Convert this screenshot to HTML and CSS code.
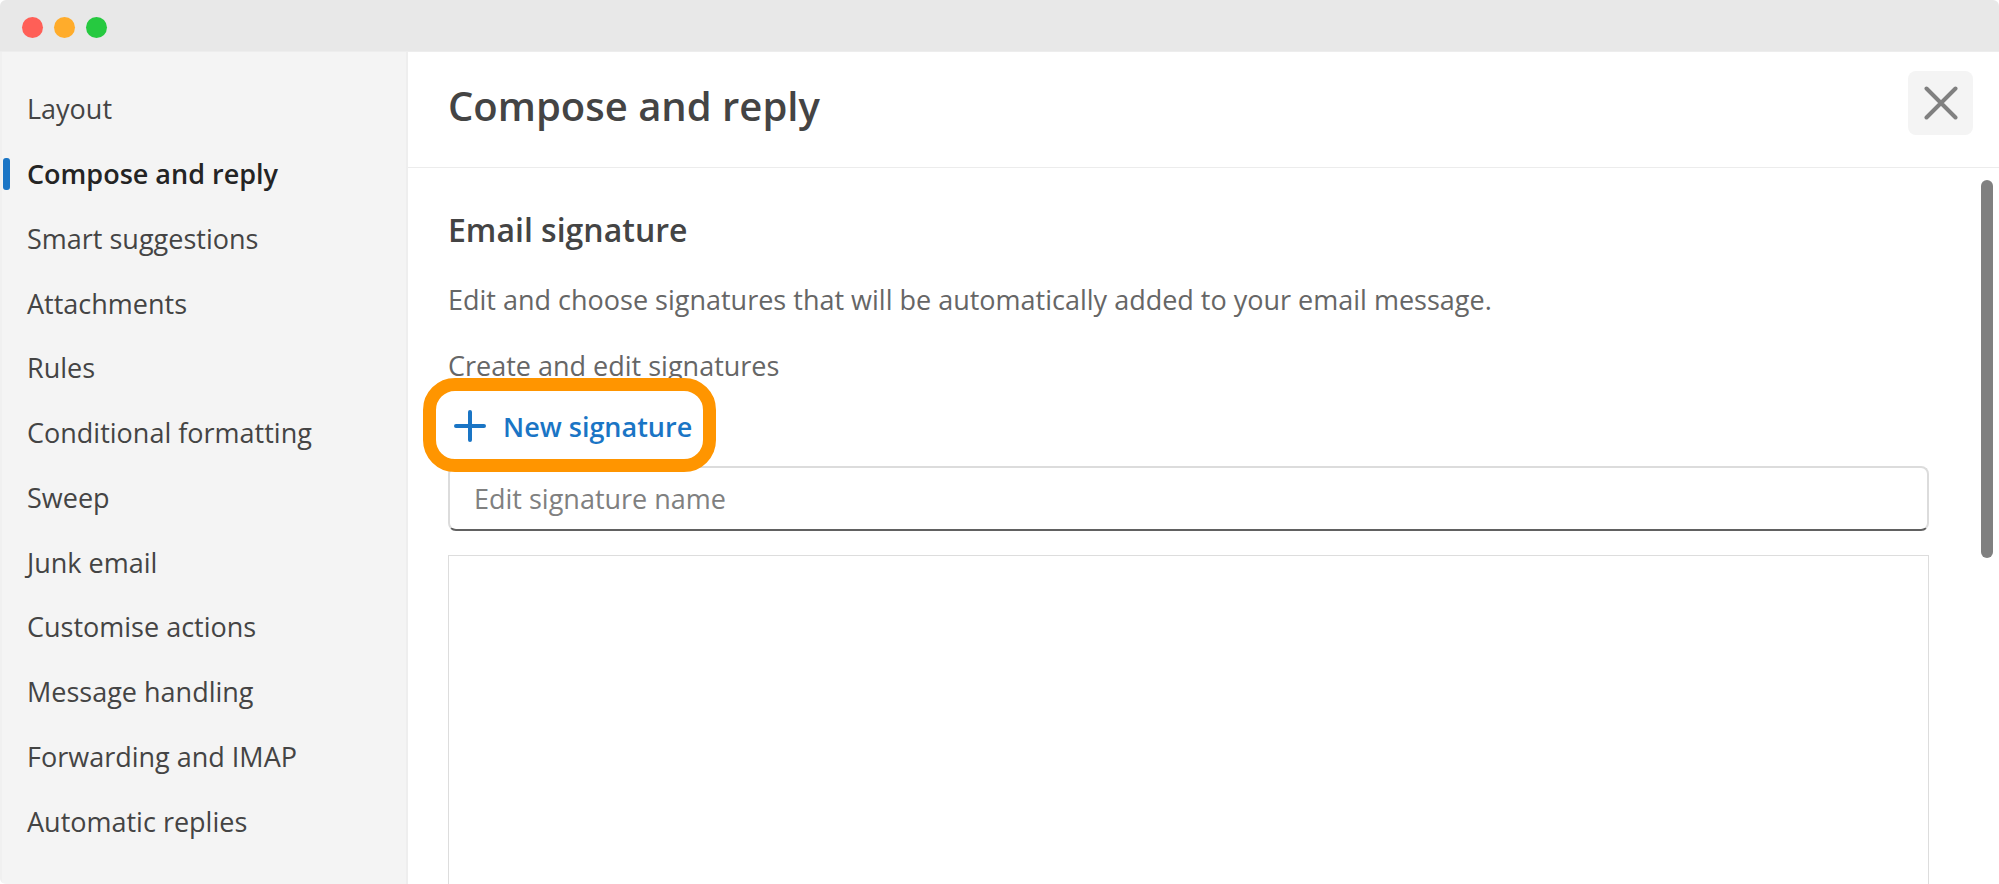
FILE: index.html
```html
<!DOCTYPE html>
<html lang="en">
<head>
  <meta charset="UTF-8">
  <meta name="viewport" content="width=device-width, initial-scale=1.0">
  <title>Compose and reply</title>
  <link rel="stylesheet" href="styles.css">
</head>
<body>
  <div class="window">
    <div class="titlebar">
      <span class="dot red"></span>
      <span class="dot yellow"></span>
      <span class="dot green"></span>
    </div>

    <div class="settings">
      <nav class="sidebar">
        <a class="navItem" href="#">Layout</a>
        <a class="navItem active" href="#">Compose and reply</a>
        <a class="navItem" href="#">Smart suggestions</a>
        <a class="navItem" href="#">Attachments</a>
        <a class="navItem" href="#">Rules</a>
        <a class="navItem" href="#">Conditional formatting</a>
        <a class="navItem" href="#">Sweep</a>
        <a class="navItem" href="#">Junk email</a>
        <a class="navItem" href="#">Customise actions</a>
        <a class="navItem" href="#">Message handling</a>
        <a class="navItem" href="#">Forwarding and IMAP</a>
        <a class="navItem" href="#">Automatic replies</a>
      </nav>

      <main class="panel">
        <header class="panelHeader">
          <h1>Compose and reply</h1>
          <button type="button" class="closeBtn" aria-label="Close">
            <svg width="34" height="34" viewBox="0 0 34 34">
              <path d="M2.5 2.5 L31.5 31.5 M31.5 2.5 L2.5 31.5" />
            </svg>
          </button>
        </header>

        <div class="content">
          <h2>Email signature</h2>
          <p class="intro">Edit and choose signatures that will be automatically added to your email message.</p>
          <label class="fieldLabel" for="signatureName">Create and edit signatures</label>
          <button type="button" class="newBtn">
            <svg width="32" height="32" viewBox="0 0 32 32">
              <path d="M16 2 V30 M2 16 H30" />
            </svg>
            New signature
          </button>
          <input type="text" class="nameInput" id="signatureName" placeholder="Edit signature name">
          <textarea class="editor" aria-label="Signature"></textarea>
          <div class="scrollThumb"></div>
        </div>
      </main>
    </div>
  </div>
</body>
</html>
```

FILE: styles.css
```css
*,
*::before,
*::after {
  box-sizing: border-box;
}

body {
  margin: 0;
  background-color: #fff;
  font-family: "Open Sans", "Noto Sans", sans-serif;
  font-size: 27px;
  color: #444;
}

.window {
  display: flex;
  flex-direction: column;
  height: 100vh;
  border-radius: 6px;
  overflow: hidden;
}

.titlebar {
  display: flex;
  flex: none;
  align-items: center;
  gap: 11px;
  height: 52px;
  padding: 3px 22px 0;
  background-color: #e8e8e8;
  border-bottom: 1px solid #ededed;
}
.dot {
  width: 21px;
  height: 21px;
  border-radius: 50%;
}
.red {
  background-color: #ff5f57;
}
.yellow {
  background-color: #ffac2b;
}
.green {
  background-color: #26c940;
}

.settings {
  display: flex;
  flex: 1;
  min-height: 0;
}

/* left menu */
.sidebar {
  display: flex;
  flex: none;
  flex-direction: column;
  width: 408px;
  padding: 25px 0 30px;
  background-color: #f4f4f4;
  border-left: 2px solid #f0f0f0;
  border-right: 2px solid #eee;
}
.navItem {
  display: flex;
  flex: 1;
  align-items: center;
  position: relative;
  padding-left: 25px;
  line-height: 40px;
  color: #444;
  text-decoration: none;
}
.active {
  color: #242424;
  font-weight: 600;
}
.active::before {
  content: "";
  position: absolute;
  left: 1px;
  top: 16px;
  width: 7px;
  height: 32px;
  border-radius: 3px;
  background-color: #1a75c5;
}

/* right side */
.panel {
  display: flex;
  flex: 1;
  flex-direction: column;
  min-width: 0;
}
.panelHeader {
  display: flex;
  flex: none;
  align-items: center;
  justify-content: space-between;
  height: 116px;
  padding: 0 26px 14px 40px;
  border-bottom: 1px solid #ececec;
}
h1 {
  margin: 6px 0 0;
  font-size: 40px;
  line-height: 56px;
  font-weight: 600;
}
.closeBtn {
  display: flex;
  align-items: center;
  justify-content: center;
  width: 65px;
  height: 64px;
  padding: 0;
  border: none;
  border-radius: 8px;
  background-color: #f4f4f4;
}
.closeBtn path {
  stroke: #808080;
  stroke-width: 4;
  stroke-linecap: round;
}

.content {
  display: flex;
  flex: 1;
  flex-direction: column;
  align-items: flex-start;
  position: relative;
  min-height: 0;
  padding: 40px 70px 0 40px;
  overflow: hidden;
}
h2 {
  margin: 0 0 28px;
  font-size: 32px;
  line-height: 44px;
  font-weight: 600;
}
.intro {
  margin: 0 0 26px;
  line-height: 40px;
  color: #666;
}
.fieldLabel {
  line-height: 40px;
  color: #666;
}
.newBtn {
  display: flex;
  align-items: center;
  gap: 17px;
  position: relative;
  height: 80px;
  padding: 0 0 0 6px;
  border: none;
  background: none;
  color: #1a75c5;
  font-family: inherit;
  font-size: 27px;
  font-weight: 600;
}
.newBtn path {
  stroke: #1a75c5;
  stroke-width: 4;
  stroke-linecap: round;
}
/* orange ring round the button */
.newBtn::after {
  content: "";
  position: absolute;
  top: -8px;
  left: -25px;
  right: -24px;
  height: 94px;
  border: 13px solid #ff9500;
  border-radius: 32px;
}
.nameInput {
  flex: none;
  width: 100%;
  height: 65px;
  padding: 0 24px;
  border: 2px solid #dcdcdc;
  border-bottom: 2px solid #616161;
  border-radius: 8px;
  background-color: #fff;
  font-family: inherit;
  font-size: 27px;
  color: #444;
}
.nameInput::placeholder {
  color: #808080;
}
.editor {
  flex: 1;
  width: 100%;
  margin-top: 24px;
  padding: 20px;
  border: 1px solid #ddd;
  border-bottom: none;
  font-family: inherit;
  font-size: 27px;
  resize: none;
}
.scrollThumb {
  position: absolute;
  top: 12px;
  right: 6px;
  width: 12px;
  height: 378px;
  border-radius: 6px;
  background-color: #808080;
}
```
